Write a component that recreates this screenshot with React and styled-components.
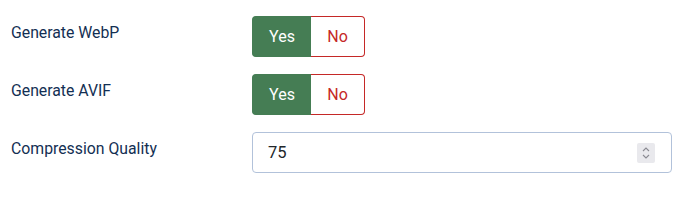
import React, { useState } from "react";
import styled, { createGlobalStyle } from "styled-components";

const Global = createGlobalStyle`
  html, body { margin: 0; padding: 0; background: #fff; }
  body { font-family: Roboto, "Noto Sans", sans-serif; }
  * { box-sizing: border-box; }
`;

const Form = styled.div`
  padding: 16px 8px 0 11px;
  display: flex;
  flex-direction: column;
  gap: 17px;
`;

const Row = styled.div`
  display: grid;
  grid-template-columns: 241px 420px;
  align-items: start;
`;

const Label = styled.label`
  font-size: 15.8px;
  line-height: 22px;
  padding-top: 6px;
  color: #132f53;
`;

const Switcher = styled.div`
  display: flex;
  height: 41px;
  width: 113px;
`;

const Option = styled.button`
  font-family: Roboto, "Noto Sans", sans-serif;
  font-size: 16px;
  height: 41px;
  margin: 0;
  padding: 0;
  cursor: pointer;
  width: ${(p) => (p.$side === "yes" ? "59px" : "54px")};
  border-radius: ${(p) => (p.$side === "yes" ? "4px 0 0 4px" : "0 4px 4px 0")};
  border: 1px solid ${(p) => (p.$side === "yes" ? "#457d54" : "#c52827")};
  ${(p) => (p.$side === "yes" ? "border-right: none;" : "border-left: none;")}
  background: ${(p) =>
    p.$active ? (p.$side === "yes" ? "#457d54" : "#c52827") : "#fff"};
  color: ${(p) =>
    p.$active ? "#fff" : p.$side === "yes" ? "#457d54" : "#c52827"};
`;

const NumberBox = styled.div`
  position: relative;
  height: 41px;
  width: 420px;
  border: 1px solid #b2c2da;
  border-radius: 4px;
  display: flex;
  align-items: center;
  padding: 0 15px;
  font-size: 16.5px;
  color: #22262a;
`;

const Spinner = styled.div`
  position: absolute;
  right: 16px;
  top: 10px;
  width: 18px;
  height: 20px;
  background: #e9e9ed;
  border-radius: 2px;
  display: flex;
  align-items: center;
  justify-content: center;
`;

function Toggle({ value, onChange }) {
  return (
    <Switcher>
      <Option $side="yes" $active={value} onClick={() => onChange(true)}>
        Yes
      </Option>
      <Option $side="no" $active={!value} onClick={() => onChange(false)}>
        No
      </Option>
    </Switcher>
  );
}

export default function App() {
  const [webp, setWebp] = useState(true);
  const [avif, setAvif] = useState(true);
  return (
    <>
      <Global />
      <Form>
        <Row>
          <Label>Generate WebP</Label>
          <Toggle value={webp} onChange={setWebp} />
        </Row>
        <Row>
          <Label>Generate AVIF</Label>
          <Toggle value={avif} onChange={setAvif} />
        </Row>
        <Row>
          <Label>Compression Quality</Label>
          <NumberBox>
            75
            <Spinner>
              <svg width="10" height="14" viewBox="0 0 10 14" fill="none" stroke="#8a8a92" strokeWidth="1.1">
                <path d="M2 5 L5 2 L8 5" />
                <path d="M2 9 L5 12 L8 9" />
              </svg>
            </Spinner>
          </NumberBox>
        </Row>
      </Form>
    </>
  );
}
